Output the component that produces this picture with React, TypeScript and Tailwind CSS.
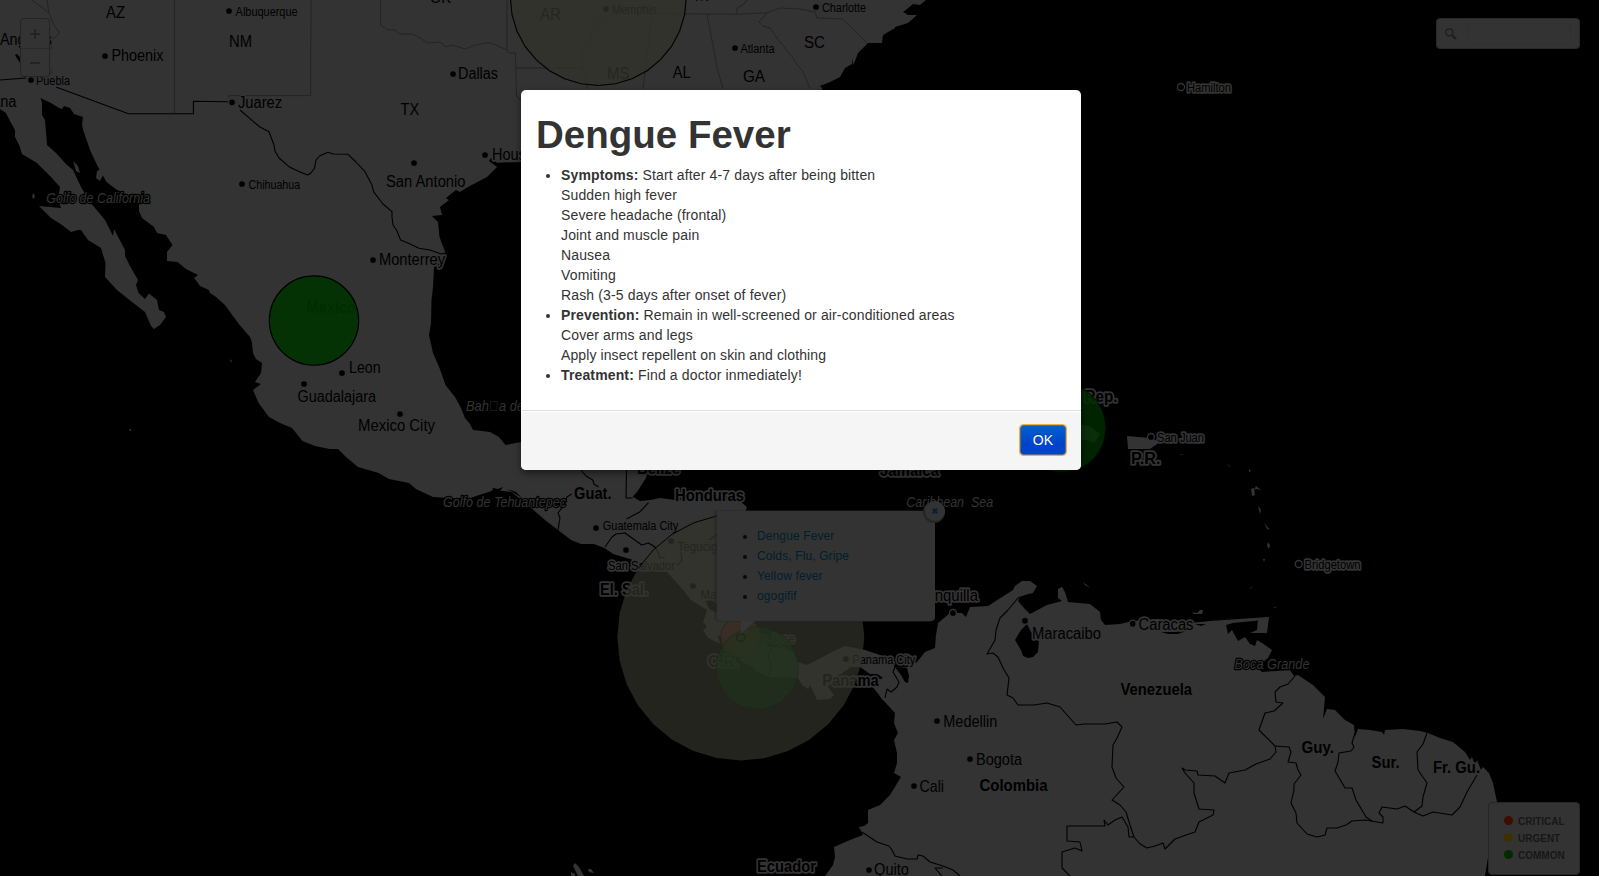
import React from "react";

const CENTRAL_NORTH =
  "M0,0 L926,0 920,5 913,4 907,9 903,12 908,15 917,15 908,23 895,27 895,22 895,28 883,35 882,43 868,43 858,53 855,61 853,65 853,58 852,64 845,68 840,77 830,82 820,86 822,88 822,130 521,130 521,162 497,162.7 491,158 489,161 497,167 487,177 468,187 460,192 456,190 446,198 449,200 440,207 442,215 432,216 438,222 439.5,237 445.5,253 440,262 434,267 433,287 431.5,300 431,323 429,335 433,353 439.5,368 445.5,385 455,397 461,408 465,418 470,424 473,430 490,432 499,437 505.5,445 521,442 560,440 620,400 655,400 647.5,470 646,478 637,492 632.6,496.7 640,501 650,500 660,498 675,500 724,500 741,502 747,507 735,540 740,600 747,627 755,640 772,647 782,646 793,652 798,662 807,665 813,662 832,652 845,646 865,650 880,655 895,667 903,668 910,690 883,700 873,687 868,679 885,679 877,674 870,674 860,667 850,667 847,670 836,677 828,687 834,695 830,699 817,700 813,691 810,685 808,689 802,685 798,678 770,677 757,672 752,667 742,662 733,647 725,639 718,635 720,644 708,638 703,630 707,627 703,622 707,610 691,600 680.6,587 667,572 644,570 633,560 623,557 613,554 604.5,548 594,544 581,544 571,540 558,530 545,520 530,507 511.5,492 494.6,490 470,498 449.5,498 433,497 416,489 409,483 389,479 378.6,473 358,467 346,457 338,449 329.6,449 315,446 302.5,441 292,428 280,423 269,417 258.6,403 253,390 261,384 255,382 261,373 262,363 256,359 253,353 252,343 250,337 238,323 225,305 216,297 210,293 209,290 200,286 198,283 194,278 198,275 186,269 177.6,262 167,261 167,252 172.5,245 166,235 157,233 154,227 142,218 139,211 139,200 117,190 106.5,182 98,167 90,150 87,141 83,130 82,124 83,117 74,114 70,108 64,106 62,109 59,108 51,103 40.5,98 42,103 42,115 45,120 47,145 56,153 66,164 73,170 81,187 90,202 105,220 113,236 114,229 125,250 125,256 130,266 138,280 136,285 138.6,293 145,299 149,293.5 157,300 159,310 164,312 166,317 160,325 154,329 151,326 145,312 132,302 117,290 105,277 105.5,263 101,248 88,240 81,230 78,230 71,232 62,225 51,218 39,206 61,208 58,200 60,187 51,177 37,163 22,154 20,147 15,137 15,130 11,123 6,113 0,109 Z";

const SOUTH =
  "M873,687 L883,700 895,713 894,723 898,733 894,740 897,753 897,763 894,773 901,777 890,795 880,805 868,810 868,823 864,826 859,827 863,835 850,840 834,847 835,857 833,865 825,876 1485,876 1497,802 1493,783 1489,773 1483,767 1481,770 1477,760 1475,765 1472,757 1470,760 1465,752 1453,742 1440,738 1428,733 1420,731 1403,729 1385,730 1384,735 1382,732 1370,730 1358,729 1355,737 1354,725 1345,720 1335,710 1327,709 1323,719 1325,697 1313,685 1298,675 1294,676 1290,670 1262,672 1257,667 1268,658 1272,650 1265,645 1257,640 1255,646 1250,644 1245,637 1238,641 1232,630 1228,634 1226,625 1233,623 1264,620 1268,617 1210,621 1190,623 1182,626 1158,619 1133,621 1120,624 1105,625 1101,620 1100,612 1090,604 1068,602 1065,592 1062,587 1058,589 1058,598 1062,601 1047,605 1030,614 1024,608 1018,601 1020,597 1033,593 1037,586 1030,581 1022,581 1015,586 1013,590 988,606 970,607 966,617 962,613 950,613 938,623 936,635 935,648 925,652 917,662 907,667 893,668 880,680 Z";

const ISLANDS = [
  "M1258,619 L1269,617 1267,633 1250,633 1257,630 Z",
  "M1127,436 L1150,438 1160,442 1150,449 1128,449 Z",
  "M1081,425 L1090,426 1100,434 1094,443 1087,440 1081,440 Z",
  "M1192,612 L1197,613 1200,610 1203,610 1202,614 1194,614 Z",
  "M1251,489 l3,-1 1,7 -3,1 Z",
  "M1256,486 l5,4 -5,-1 -2,1 Z",
  "M1258,506 l3,4 -1,4 Z",
  "M1264,523 l6,7 -3,-1 Z",
  "M1268,542 l2,3 -1,4 -2,-3 Z",
  "M1263,559 l2,0 -1,3 Z",
  "M1253,585 l-2,4 -1,0 Z",
  "M1249,469 l2,2 -2,1 Z",
  "M1227,464 l2,1 2,3 Z",
  "M1083,582 l5,4 2,2 -5,-3 Z",
  "M1062,577 l3,3 Z",
  "M1180,454 l4,1 -3,0 Z",
  "M1273,608 l5,-2 -3,2 Z",
  "M73,161 l5,5 2,7 -4,-2 Z",
  "M97,171 l4,-2 2,6 -3,6 -4,-3 Z",
  "M32,197 l1,-4 2,3 -1,3 Z",
  "M230,359 l2,2 -1,2 Z",
  "M129,429 l2,0 0,2 -1,0 Z",
  "M575,863 l4,4 5,9 -6,0 -5,-10 Z",
  "M588,869 l3,0 3,4 -5,-1 Z",
  "M571,872 l4,2 0,2 -4,0 Z",
  "M784,690 l4,4 -3,-1 Z",
];

const WATER = [
  "M1015,640 L1021,630 1027,624 1031,632 1039,640 1038,652 1033,657 1028,658 1023,656 1021,650 Z",
  "M895,667 L907,668 909,676 908,683 905,682 901,675 Z",
  "M703,594 L717,604 717,613 709,609 Z",
  "M15,55 L17,54 23,61 22,66 Z",
  "M1161,632 L1168,634 1178,634 1186,631 1175,632 Z",
  "M493,488 l5,1 5,-2 -3,4 3,2 -6,-2 -5,1 Z",
  "M507,489 l9,3 6,6 -8,-5 Z",
  "M1195,624 l11,0 -5,2 Z",
];

const BORDERS = [
  "M0,80 L26,78",
  "M56,87 L128.5,113.7 193.4,113.7 193.4,101.3 228,101.7",
  "M240,110 L253.5,121.7 260,127 269,131.7 274,145 275,151 279,158 289,166.7 300,172 307.6,175 311,173 314.4,168.3 316,160 319.5,156 324,154 328,152.3 333,154 348,154.3 356,162 365,171.7 372,185 373.5,191.7 383,204 392,211.7 392,217 393,225 397,231 400.6,240 408,243 419,248.3 430,250 441,254 445.5,253",
  "M581,470 L586,476 592.7,480 594,484 598.5,487",
  "M626.5,470 L626,498 632.6,498",
  "M648.5,502.7 L640,511.7 626.5,519",
  "M571.7,494 L567,497 564,505 558,513 560,518 558,530",
  "M605,547 L612,537 616,534 625,533 632,538 641.7,545 648.5,543 655,547 658,552 659.6,558 665,557",
  "M677,566 L682,560 680.6,550",
  "M709,540 L717,535",
  "M782,648 L772,646 768,657 772,667 768,675",
  "M885,698 L887,689 891,692 897,687 899,682 893,672 895,667",
  "M1030,594 L1018,598 1008,610 1000,618 996,630 995,640 987,654 993,653 998,657 1003,668 1009,678 1007,695 1013,698 1018,705 1034,705 1047,703 1060,707 1076,725 1084,724 1105,724 1117,722 1122,727 1117,738 1113,745 1112,767 1116,778 1124,787 1112,800 1120,805 1126,812 1130,825 1134,837",
  "M862,832 L877,842 889,846 892,850 895,856 907,859 917,859 918,855 923,856 930,862 943,866 953,870 960,876",
  "M943,868 L935,868 942,876",
  "M1070,876 L1062,868 1062,852 1075,848 1082,851 1080,842 1067,841 1067,826 1105,826 1104,820 1108,825 1115,820 1122,817 1128,827 1129,837 1134,837 1140,844 1147,848 1155,846 1163,843 1165,849 1175,839 1186,835 1195,832 1199,822 1213,815 1214,810 1199,809 1194,793 1194,783 1185,773 1182,768 1185,770 1197,771 1198,775 1215,776 1225,783 1229,773 1245,770 1256,764 1270,759 1276,752 1275,746 1259,730 1265,713 1274,711 1283,703 1276,702 1275,692 1280,687 1288,684 1295,676",
  "M1275,746 L1289,747 1291,752 1288,762 1296,763 1298,770 1301,775 1294,784 1294,790 1291,803 1296,813 1297,823 1307,834 1317,837 1325,835 1327,828 1337,828 1346,825 1352,821 1365,820 1383,823 1383,817 1379,813 1382,807 1397,809 1405,806 1414,812 1423,816 1433,812 1452,815 1460,807 1467,792 1477,775",
  "M1355,733 L1352,743 1354,747 1351,751 1339,753 1338,762 1335,771 1345,788 1352,788 1356,800 1366,817 1372,821",
  "M1427,733 L1423,744 1417,752 1418,770 1427,783 1423,797 1422,806 1414,812",
];

const STATE_LINES = [
  "M174.5,0 V113",
  "M311,0 L310.6,95.6 229,95.6 229,98",
  "M380.6,0 L380.6,25 388,30 395,30 399,34 412.4,34 420,38 427.6,43 440,42 446,47 452,45 465,49 475,45 490,42.6 498,46 507,50 509,53 515.5,53 516.5,96 521,101",
  "M507,0 V50",
  "M516,68 H582",
  "M32,0 L49,13 54,25 59.5,33 52,40 51,50",
  "M47,0 L49,13",
  "M50,68 L52,71 50,75",
  "M658,13.5 L707,14 738,14.3 767,12.7 780,8 800,9 815,12 817,18 843,19 867,43",
  "M747,0 L743,5 737,8 737,14",
  "M707,14 L717,67 723,89",
  "M767,13 L759,22 763,26 770,28 777,38 785,48 793,58 798,66 802,70 810,88",
  "M652,15 L643,89",
  "M605,14 L600,20 592,30 591,38 583,47 581,55 583,62 582,70 587,80 587,89",
];

const DOTS: [number, number][] = [
  [229, 11], [105, 56], [31, 80], [232, 102.3], [453, 74], [485, 155], [414, 163], [242, 184],
  [373, 260], [342, 373], [304, 384], [400, 414], [596, 528], [626, 550], [671, 541], [693, 586],
  [846, 659], [606, 9], [735, 48], [816, 7], [1151, 437], [1298.7, 564], [953, 613], [1025, 620.7],
  [1132.7, 623.7], [937, 721], [970, 759], [914, 786], [869, 870], [1181, 87],
];

type Label = { t: string; x: number; y: number; w: number; s?: number; kind?: "city" | "country" | "sea" };

const LABELS: Label[] = [
  { t: "AZ", x: 106, y: 18, w: 19 },
  { t: "Albuquerque", x: 235.6, y: 16, w: 62, s: 12.5 },
  { t: "NM", x: 229, y: 47, w: 23 },
  { t: "Phoenix", x: 111.5, y: 61, w: 52 },
  { t: "Angeles", x: 0, y: 45, w: 52 },
  { t: "Puebla", x: 36, y: 85, w: 34, s: 12.5 },
  { t: "Tijuana", x: -31, y: 107, w: 47.5 },
  { t: "Juarez", x: 238, y: 108, w: 44 },
  { t: "OK", x: 430, y: 3, w: 21 },
  { t: "Dallas", x: 458, y: 79, w: 40 },
  { t: "TX", x: 400.6, y: 115, w: 18.5 },
  { t: "Houston", x: 492, y: 160, w: 54 },
  { t: "San Antonio", x: 386, y: 187, w: 79.5 },
  { t: "Chihuahua", x: 248.5, y: 189, w: 51.7, s: 12.5 },
  { t: "Golfo de California", x: 46.2, y: 203, w: 103.7, s: 14, kind: "sea" },
  { t: "Monterrey", x: 379, y: 265, w: 66 },
  { t: "Mexico", x: 306.6, y: 312.6, w: 49, kind: "country" },
  { t: "Leon", x: 349, y: 373, w: 31.5 },
  { t: "Guadalajara", x: 297.5, y: 402.3, w: 78.5 },
  { t: "Mexico City", x: 358, y: 431, w: 77 },
  { t: "Bah", x: 466, y: 411, w: 23, s: 14, kind: "sea" },
  { t: "a de Campeche", x: 499, y: 411, w: 90, s: 14, kind: "sea" },
  { t: "Golfo de Tehuantepec", x: 443, y: 507, w: 123, s: 14, kind: "sea" },
  { t: "Guat.", x: 574, y: 499, w: 37.5, kind: "country" },
  { t: "Honduras", x: 675, y: 501, w: 69, kind: "country" },
  { t: "Belize", x: 637, y: 474, w: 43, kind: "country" },
  { t: "Guatemala City", x: 602.8, y: 529.5, w: 75.5, s: 12.5 },
  { t: "San Salvador", x: 608, y: 570, w: 67, s: 12.5 },
  { t: "El. Sal.", x: 600, y: 594.5, w: 48, kind: "country" },
  { t: "Tegucigalpa", x: 677.5, y: 551, w: 62, s: 12.5 },
  { t: "Managua", x: 700.5, y: 599, w: 48, s: 12.5 },
  { t: "San Jose", x: 747, y: 643, w: 48, s: 12.5 },
  { t: "C.R.", x: 708, y: 667, w: 31, kind: "country" },
  { t: "Panama City", x: 852.3, y: 664, w: 63, s: 12.5 },
  { t: "Panama", x: 822.3, y: 686, w: 56.5, kind: "country" },
  { t: "AR", x: 540, y: 20, w: 21 },
  { t: "Memphis", x: 611.7, y: 14, w: 45, s: 12.5 },
  { t: "TN", x: 693, y: 0.7, w: 16 },
  { t: "MS", x: 607, y: 79, w: 22.5 },
  { t: "AL", x: 672.7, y: 78, w: 18 },
  { t: "GA", x: 743, y: 82, w: 22 },
  { t: "SC", x: 804, y: 48, w: 21 },
  { t: "Atlanta", x: 740.5, y: 53, w: 34, s: 12.5 },
  { t: "Charlotte", x: 822, y: 12, w: 44, s: 12.5 },
  { t: "Rep.", x: 1084.5, y: 401.5, w: 33, kind: "country" },
  { t: "San Juan", x: 1157, y: 442, w: 47, s: 12.5 },
  { t: "P.R.", x: 1131, y: 464, w: 29.5, kind: "country" },
  { t: "Jamaica", x: 880, y: 476, w: 59, kind: "country" },
  { t: "Caribbean  Sea", x: 906.3, y: 507, w: 87, s: 14, kind: "sea" },
  { t: "Bridgetown", x: 1304.5, y: 569, w: 56, s: 12.5 },
  { t: "Barranquilla", x: 898, y: 601, w: 80 },
  { t: "Maracaibo", x: 1032, y: 639, w: 69 },
  { t: "Caracas", x: 1138.5, y: 630, w: 55 },
  { t: "Boca Grande", x: 1234.5, y: 669, w: 75, s: 14, kind: "sea" },
  { t: "Medellin", x: 943.3, y: 726.5, w: 54 },
  { t: "Bogota", x: 976, y: 765, w: 46 },
  { t: "Cali", x: 919.5, y: 792, w: 24.5 },
  { t: "Colombia", x: 979.5, y: 791, w: 68, kind: "country" },
  { t: "Venezuela", x: 1120.5, y: 694.5, w: 71.5, kind: "country" },
  { t: "Quito", x: 874, y: 875, w: 35 },
  { t: "Ecuador", x: 757, y: 872, w: 59, kind: "country" },
  { t: "Guy.", x: 1301.5, y: 753, w: 32.5, kind: "country" },
  { t: "Sur.", x: 1371.5, y: 768, w: 28, kind: "country" },
  { t: "Fr. Gu.", x: 1433, y: 773, w: 47, kind: "country" },
  { t: "Hamilton", x: 1187, y: 92.3, w: 44, s: 12.5 },
];

const ring = (cx: number, cy: number, r: number, n = 32) =>
  Array.from({ length: n }, (_, i) => {
    const a = (i / n) * Math.PI * 2;
    return `${(cx + r * Math.cos(a)).toFixed(1)},${(cy + r * Math.sin(a)).toFixed(1)}`;
  }).join(" ");

function WorldMap() {
  return (
    <svg width="1599" height="876" viewBox="0 0 1599 876" className="block bg-black font-['Liberation_Sans',Arial,sans-serif]">
      <g fill="#333333">
        <path d={CENTRAL_NORTH} />
        <path d={SOUTH} />
        {ISLANDS.map((d) => <path key={d} d={d} />)}
      </g>
      <g fill="#000">{WATER.map((d) => <path key={d} d={d} />)}</g>
      <g fill="none" stroke="#1f1f1f" strokeWidth="0.8" strokeLinejoin="round">
        {STATE_LINES.map((d) => <path key={d} d={d} />)}
      </g>
      <g fill="none" stroke="#000" strokeWidth="1.1" strokeLinejoin="round">
        {BORDERS.map((d) => <path key={d} d={d} />)}
      </g>
      {DOTS.map(([x, y]) => (
        <circle key={`${x}-${y}`} cx={x} cy={y} r="3.5" fill="#000" stroke="#333333" strokeWidth="1.3" />
      ))}
      {LABELS.map((l) => {
        const sea = l.kind === "sea";
        return (
          <text
            key={l.t + l.x}
            x={l.x}
            y={l.y}
            textLength={l.w}
            lengthAdjust="spacingAndGlyphs"
            fontSize={l.s ? l.s : 16}
            fontWeight={l.kind === "country" ? 700 : 400}
            fontStyle={sea ? "italic" : "normal"}
            fill={sea ? "#333333" : "#000"}
            stroke={sea ? "#000" : "#333333"}
            strokeWidth={sea ? 2.5 : 3.6}
            strokeLinejoin="round"
            paintOrder="stroke"
            xmlSpace="preserve"
          >
            {l.t}
          </text>
        );
      })}
      <rect x="490.5" y="401.5" width="6.5" height="9" fill="none" stroke="#1a1a1a" strokeWidth="0.8" />

      <polygon points={ring(598.3, -2.5, 88)} fill="rgb(50,51,41)" fillOpacity="0.75" stroke="#000" strokeWidth="1.1" />
      <circle cx="314" cy="320.6" r="44.7" fill="rgb(0,50,0)" fillOpacity="0.89" stroke="#000" strokeWidth="1.1" />
      <circle cx="1061.6" cy="428" r="44.4" fill="rgb(0,45,0)" fillOpacity="0.8" stroke="#000" strokeWidth="0.8" />
      <circle cx="740.8" cy="637.5" r="20.2" fill="rgb(90,28,22)" fillOpacity="0.75" stroke="#000" strokeWidth="0.8" />
      <polygon points={ring(740.8, 637, 123.5)} fill="rgb(50,51,43)" fillOpacity="0.7" />
      <path d="M639,567.5 L653.5,549.7 672,534.3 693.6,522.9 717,515.8" fill="none" stroke="#000" strokeWidth="1" />
      <circle cx="757.3" cy="668" r="41.2" fill="rgb(32,50,28)" fillOpacity="0.65" stroke="#1a2416" strokeOpacity="0.6" strokeWidth="0.8" />
      <circle cx="740.8" cy="637.5" r="4" fill="none" stroke="#1a2a18" strokeWidth="1.6" />
    </svg>
  );
}

const DISEASES = ["Dengue Fever", "Colds, Flu, Gripe", "Yellow fever", "ogogifif"];

function Popup() {
  return (
    <div className="absolute left-[717px] top-[511px] h-[110px] w-[218px] rounded-b-[4px] bg-[#333333] shadow-[-2px_0_0_1px_rgba(36,36,33,0.45)]">
      <ul className="list-disc pl-10 pt-[15px] text-xs leading-5 tracking-[0.12px] text-[#0a0a0a]">
        {DISEASES.map((d) => (
          <li key={d}><span className="text-[#001e2d]">{d}</span></li>
        ))}
      </ul>
      <svg className="absolute left-[23px] top-[110px]" width="18" height="14" viewBox="0 0 18 14">
        <path d="M0 0 H15 L.8 13 V0Z" fill="#363636" />
      </svg>
      <div className="absolute -right-[10px] -top-[10px] flex size-5 items-center justify-center rounded-full bg-[#333333] shadow-[-1px_1px_0_1px_#262626]">
        <svg width="6" height="6" viewBox="0 0 6 6"><path d="M.8 .8 5.2 5.2M5.2 .8 .8 5.2" stroke="#0b2030" strokeWidth="2.2" /></svg>
      </div>
    </div>
  );
}

function ZoomControl() {
  return (
    <div className="absolute left-5 top-[18px] flex h-[59px] w-[30px] flex-col rounded-[4px] border border-[#242424] bg-[#333333]">
      <div className="flex flex-1 items-center justify-center border-b border-[#292929] pt-[2px]">
        <svg width="10" height="10" viewBox="0 0 10 10"><path d="M0 5H10M5 0V10" stroke="#202020" strokeWidth="1.6" /></svg>
      </div>
      <div className="flex flex-1 items-center justify-center pt-px">
        <svg width="10" height="10" viewBox="0 0 10 10"><path d="M0 5H10" stroke="#202020" strokeWidth="1.6" /></svg>
      </div>
    </div>
  );
}

function SearchBox() {
  return (
    <div className="absolute right-[19px] top-[18px] flex h-[31px] w-[144px] items-center rounded-[4px] border border-[#292929] bg-[#333333] pl-2">
      <svg width="12" height="12" viewBox="0 0 12 12" fill="none">
        <circle cx="4.3" cy="4.3" r="3.5" stroke="#1d1d1d" strokeWidth="1.3" />
        <path d="M7 7 L11 11" stroke="#1d1d1d" strokeWidth="2.2" />
      </svg>
      <div className="ml-[10px] h-[21px] w-[104px] rounded-[4px] border border-[#303030]" />
    </div>
  );
}

function Legend() {
  return (
    <div className="absolute right-[19px] top-[802px] flex h-[73px] w-[92px] flex-col rounded-[4px] border border-[#262626] bg-[#333333] pl-[15px] pt-[9px] text-[10px] font-bold text-[#171717]">
      <div className="flex h-[17px] items-center gap-[5px]"><i className="size-[9px] rounded-full bg-[#3f0c02]" /><span className="pt-[2px]">CRITICAL</span></div>
      <div className="flex h-[17px] items-center gap-[5px]"><i className="size-[9px] rounded-full bg-[#3f3000]" /><span className="pt-[2px]">URGENT</span></div>
      <div className="flex h-[17px] items-center gap-[5px]"><i className="size-[9px] rounded-full bg-[#042a02]" /><span className="pt-[2px]">COMMON</span></div>
    </div>
  );
}

function Modal() {
  return (
    <div className="absolute left-[521px] top-[90px] w-[560px] overflow-hidden rounded-[5px] bg-white text-[#333333] shadow-[0_3px_7px_rgba(0,0,0,0.5)]">
      <div className="h-[320px] p-[15px]">
        <h1 className="my-[10px] text-[38.5px] font-bold leading-10">Dengue Fever</h1>
        <ul className="ml-[25px] list-disc text-sm leading-5 tracking-[0.14px]">
          <li>
            <b>Symptoms:</b> Start after 4-7 days after being bitten<br />
            Sudden high fever<br />
            Severe headache (frontal)<br />
            Joint and muscle pain<br />
            Nausea<br />
            Vomiting<br />
            Rash (3-5 days after onset of fever)
          </li>
          <li>
            <b>Prevention:</b> Remain in well-screened or air-conditioned areas<br />
            Cover arms and legs<br />
            <span className="tracking-[0.1px]">Apply insect repellent on skin and clothing</span>
          </li>
          <li><b>Treatment:</b> Find a doctor inmediately!</li>
        </ul>
      </div>
      <div className="flex justify-end border-t border-[#dddddd] bg-[#f5f5f5] px-[15px] pb-[15px] pt-[14px] shadow-[inset_0_1px_0_#fff]">
        <button className="h-[30px] rounded-[3px] border border-[#5a6a80] bg-linear-to-b from-[#0060cc] to-[#0044cc] to-60% px-3 text-sm leading-5 text-white outline outline-[#f0b040] [text-shadow:0_-1px_0_rgba(0,0,0,0.25)]">
          OK
        </button>
      </div>
    </div>
  );
}

export default function App() {
  return (
    <div className="relative h-[876px] w-[1599px] overflow-hidden bg-black font-['Liberation_Sans',Arial,sans-serif]">
      <WorldMap />
      <Popup />
      <ZoomControl />
      <SearchBox />
      <Legend />
      <Modal />
    </div>
  );
}
